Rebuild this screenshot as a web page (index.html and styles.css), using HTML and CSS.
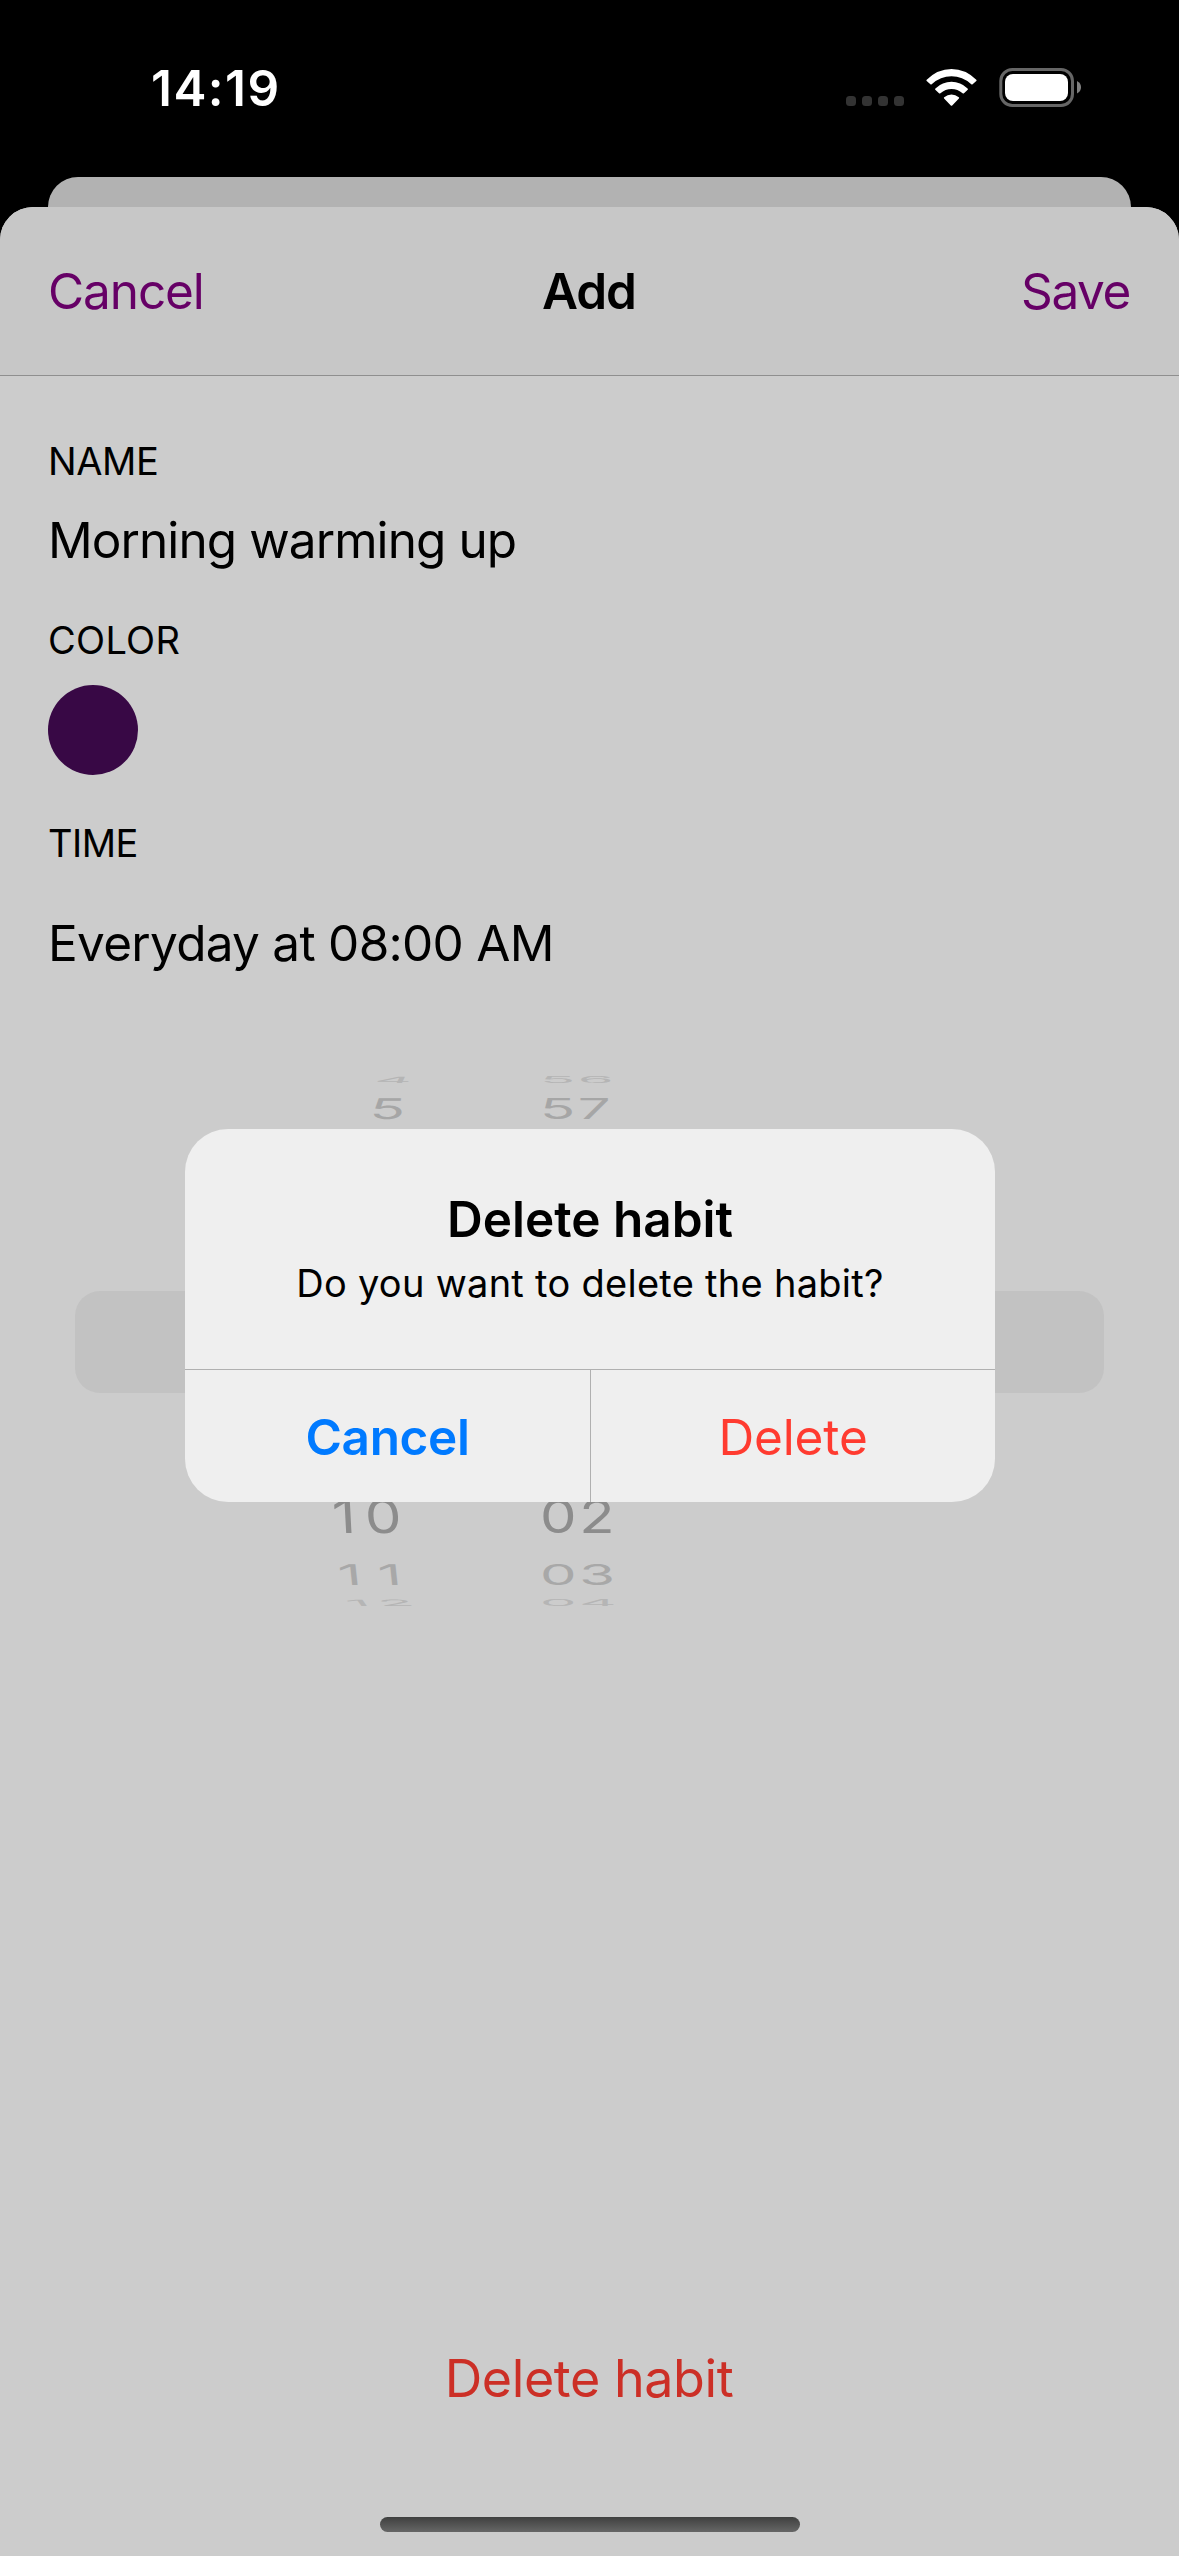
FILE: index.html
```
<!DOCTYPE html>
<html lang="en">
<head>
<meta charset="utf-8">
<title>Add habit</title>
<link rel="stylesheet" href="styles.css">
</head>
<body>
<div class="screen">
  <div class="status">
    <span class="clock">14:19</span>
    <svg class="indicators" width="240" height="40" viewBox="0 0 240 40">
      <g fill="#333">
        <rect x="0" y="28" width="10" height="10" rx="3.5"/>
        <rect x="16" y="28" width="10" height="10" rx="3.5"/>
        <rect x="32" y="28" width="10" height="10" rx="3.5"/>
        <rect x="48" y="28" width="10" height="10" rx="3.5"/>
      </g>
      <g fill="#fff">
        <path d="M80.7 11.8Q91.5 1 105.5 1T130.3 11.8Q131 12.4 130.3 13.1L126.6 16.2Q126 16.8 125.3 16.2Q116.500 8.300 105.500 8.300T85.700 16.200Q85 16.800 84.400 16.200L80.700 13.100Q80 12.400 80.700 11.800Z"/>
        <path d="M89.400 20.400Q96.500 13.800 105.500 13.800T121.600 20.400Q122.300 21 121.700 21.700L118 25.300Q117.300 25.900 116.600 25.300Q111.700 21 105.500 21T94.400 25.300Q93.700 25.900 93 25.300L89.300 21.700Q88.700 21 89.400 20.400Z"/>
        <path d="M98.200 29.300Q101.500 26.600 105.500 26.600T112.800 29.300Q113.500 29.900 112.900 30.500L106.200 37.500Q105.500 38.200 104.800 37.500L98.100 30.500Q97.500 29.900 98.200 29.300Z"/>
      </g>
      <rect x="154.800" y="1.500" width="71.700" height="36" rx="11.500" fill="none" stroke="#666" stroke-width="3"/>
      <rect x="159" y="6" width="63" height="27" rx="8" fill="#fff"/>
      <path d="M231 13Q235 15 235 19.300T231 25.500Z" fill="#808080"/>
    </svg>
  </div>

  <div class="back-sheet"></div>

  <div class="sheet">
    <div class="navbar">
      <span class="nav-cancel">Cancel</span>
      <span class="nav-title">Add</span>
      <span class="nav-save">Save</span>
    </div>
    <div class="form">
      <div class="label label-name">NAME</div>
      <div class="value value-name">Morning warming up</div>
      <div class="label label-color">COLOR</div>
      <div class="swatch"></div>
      <div class="label label-time">TIME</div>
      <div class="value value-time">Everyday at 08:00 AM</div>
    </div>
    <div class="picker">
      <div class="band"></div>
      <div class="row row-4"><span class="hour">4</span><span class="minute">56</span></div>
      <div class="row row-5"><span class="hour">5</span><span class="minute">57</span></div>
      <div class="row row-10"><span class="hour">10</span><span class="minute">02</span></div>
      <div class="row row-11"><span class="hour">11</span><span class="minute">03</span></div>
      <div class="row row-12"><span class="hour">12</span><span class="minute">04</span></div>
    </div>
    <div class="footer">
      <span class="delete-habit">Delete habit</span>
      <div class="home-indicator"></div>
    </div>
  </div>

  <div class="alert">
    <div class="alert-body">
      <div class="alert-title">Delete habit</div>
      <div class="alert-message">Do you want to delete the habit?</div>
    </div>
    <div class="alert-actions">
      <span class="alert-cancel">Cancel</span>
      <span class="alert-delete">Delete</span>
    </div>
  </div>
</div>
</body>
</html>
```
FILE: styles.css
```
* { box-sizing: border-box; }

body {
  margin: 0;
  background: #000;
  font-family: Inter, "Liberation Sans", sans-serif;
  font-size: 49.5px;
  line-height: 60px;
  color: #000;
}

.screen {
  position: relative;
  display: flex;
  flex-direction: column;
  width: 1179px;
  height: 2556px;
  overflow: hidden;
}

.status {
  display: flex;
  justify-content: space-between;
  align-items: center;
  height: 177px;
  padding: 0 93px 1px 151px;
}

.clock {
  color: #fff;
  font-weight: 600;
  letter-spacing: 1.47px;
}

.indicators { flex: none; }

.back-sheet {
  height: 30px;
  margin: 0 48px;
  border-radius: 32px 32px 0 0;
  background: #b2b2b2;
}

.sheet {
  flex: 1;
  display: flex;
  flex-direction: column;
  border-radius: 33px 33px 0 0;
  background: #ccc;
  overflow: hidden;
}

.navbar {
  display: grid;
  grid-template-columns: 1fr auto 1fr;
  align-items: center;
  height: 169px;
  padding: 0 49px 0 48px;
  border-bottom: 1px solid #8f8f8f;
  background: #c7c7c7;
}

.nav-cancel, .nav-save { color: #606; }
.nav-cancel { letter-spacing: -1.1px; }
.nav-title { font-weight: 600; letter-spacing: -1.08px; }
.nav-save { justify-self: end; letter-spacing: -1.4px; }

.form {
  display: flex;
  flex-direction: column;
  height: 642px;
  padding: 60px 48px 0;
}

.label { font-size: 38px; line-height: 50px; }
.label-name { letter-spacing: -0.39px; }
.value-name { margin-top: 24px; letter-spacing: -0.92px; }
.label-color { margin-top: 45px; letter-spacing: 0.3px; }

.swatch {
  width: 90px;
  height: 90px;
  margin-top: 20px;
  border-radius: 50%;
  background: #380845;
}

.label-time { margin-top: 43px; letter-spacing: -0.5px; }
.value-time { margin-top: 45px; letter-spacing: -0.72px; }

/* The wheel: rows get flatter and paler towards its top and bottom edges */
.picker {
  position: relative;
  display: flex;
  flex-direction: column;
  height: 648px;
  padding-top: 59px;
  font-size: 58px;
  line-height: 0;
}

.band {
  position: absolute;
  top: 273px;
  left: 75px;
  right: 75px;
  height: 102px;
  border-radius: 25px;
  background: #c2c2c2;
}

.row {
  position: relative;
  display: grid;
  grid-template-columns: 80px 1fr;
  column-gap: 129px;
  align-items: center;
  padding-left: 331px;
}

.minute { letter-spacing: 2.6px; }

.row-4, .row-12 { height: 6px; color: #b5b5b5; }
.row-5 { height: 20px; margin-top: 16px; color: #a6a6a6; }
.row-10 { height: 34px; margin-top: 380px; color: #8c8c8c; }
.row-11 { height: 21px; margin-top: 31px; color: #a8a8a8; }
.row-12 { margin-top: 15px; }

.row-4 .minute, .row-12 .minute { transform: scaleY(0.15); }
.row-5 .minute, .row-11 .minute { transform: scaleY(0.49); }
.row-10 .minute { transform: scaleY(0.8); }

.row-4 .hour { padding-left: 44px; transform: skewX(-25deg) scaleY(0.15); }
.row-5 .hour { padding-left: 39px; transform: skewX(-6deg) scaleY(0.49); }
.row-10 .hour { padding-left: 1px; letter-spacing: 9.4px; transform: skewX(3deg) scaleY(0.8); }
.row-11 .hour { padding-left: 7px; letter-spacing: 16.4px; transform: skewX(6deg) scaleY(0.49); }
.row-12 .hour { padding-left: 15px; letter-spacing: 8.4px; transform: skewX(35deg) scaleY(0.15); }

.footer {
  flex: 1;
  display: flex;
  flex-direction: column;
  align-items: center;
  justify-content: flex-end;
  padding-bottom: 24px;
}

.delete-habit {
  margin-right: 1px;
  font-size: 52px;
  letter-spacing: -0.42px;
  color: #cc2f26;
}

.home-indicator {
  width: 420px;
  height: 15px;
  margin-top: 108px;
  border-radius: 7.5px;
  background: linear-gradient(#3f403f, #666);
}

.alert {
  position: absolute;
  top: 1129px;
  left: 185px;
  display: flex;
  flex-direction: column;
  width: 810px;
  height: 373px;
  border-radius: 43px;
  background: #efefef;
  overflow: hidden;
}

.alert-body {
  flex: none;
  height: 240px;
  padding-top: 60px;
  text-align: center;
}

.alert-title { font-weight: 600; }

.alert-message {
  margin-top: 9px;
  font-size: 38px;
  line-height: 50px;
  letter-spacing: 0.28px;
}

.alert-actions {
  flex: none;
  display: grid;
  grid-template-columns: 406px 1fr;
  border-top: 1px solid #b0b0b0;
  line-height: 134px;
  text-align: center;
}

.alert-cancel {
  border-right: 1px solid #b0b0b0;
  font-weight: 600;
  letter-spacing: -0.36px;
  color: #007aff;
}

.alert-delete { letter-spacing: -0.13px; color: #ff3b30; }
```
